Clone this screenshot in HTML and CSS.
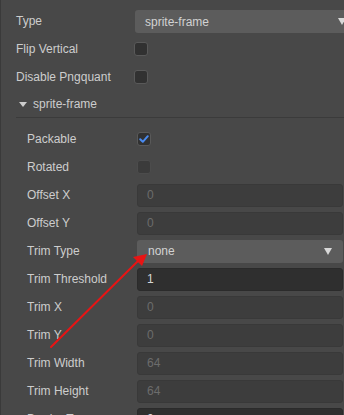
FILE: index.html
```html
<!DOCTYPE html>
<html lang="en">
  <head>
    <meta charset="utf-8" />
    <title>Inspector - sprite-frame</title>
    <link rel="stylesheet" href="styles.css">
  </head>
  <body>
    <div class="panel">
      <div class="row">
        <div class="label">Type</div>
        <div class="select select-wide">
          <span>sprite-frame</span>
          <span class="caret"></span>
        </div>
      </div>
      <div class="row">
        <div class="label">Flip Vertical</div>
        <div class="checkbox checkbox-top"></div>
      </div>
      <div class="row">
        <div class="label">Disable Pngquant</div>
        <div class="checkbox checkbox-top"></div>
      </div>

      <div class="section">
        <div class="section-header">
          <span class="fold"></span>
          <span>sprite-frame</span>
        </div>
        <div class="section-body">
          <div class="row sub">
            <div class="label">Packable</div>
            <div class="checkbox checked">
              <svg width="12" height="12" viewBox="0 0 12 12">
                <path d="M2.2 6.3 L4.8 8.8 L9.8 3.2" fill="none" stroke="#4a8bf0" stroke-width="2" stroke-linecap="round" stroke-linejoin="round"/>
              </svg>
            </div>
          </div>
          <div class="row sub">
            <div class="label">Rotated</div>
            <div class="checkbox disabled"></div>
          </div>
          <div class="row sub">
            <div class="label">Offset X</div>
            <div class="input disabled">0</div>
          </div>
          <div class="row sub">
            <div class="label">Offset Y</div>
            <div class="input disabled">0</div>
          </div>
          <div class="row sub">
            <div class="label">Trim Type</div>
            <div class="select">
              <span>none</span>
              <span class="caret"></span>
            </div>
          </div>
          <div class="row sub">
            <div class="label">Trim Threshold</div>
            <div class="input">1</div>
          </div>
          <div class="row sub">
            <div class="label">Trim X</div>
            <div class="input disabled">0</div>
          </div>
          <div class="row sub">
            <div class="label">Trim Y</div>
            <div class="input disabled">0</div>
          </div>
          <div class="row sub">
            <div class="label">Trim Width</div>
            <div class="input disabled">64</div>
          </div>
          <div class="row sub">
            <div class="label">Trim Height</div>
            <div class="input disabled">64</div>
          </div>
          <div class="row sub">
            <div class="label">Border Top</div>
            <div class="input">0</div>
          </div>
        </div>
      </div>
    </div>

    <!-- annotation arrow -->
    <svg class="annotation" width="344" height="415" viewBox="0 0 344 415">
      <line x1="51" y1="347" x2="139" y2="260" stroke="#e81414" stroke-width="2" stroke-linecap="round"/>
      <polygon points="147,254 133,257 142,266" fill="#e81414"/>
    </svg>
  </body>
</html>
```

FILE: styles.css
```css
* {
  margin: 0;
  padding: 0;
  box-sizing: border-box;
}

html {
  overflow: hidden;
}

body {
  font-family: 'Liberation Sans', Arial, sans-serif;
  font-size: 12px;
  color: #cdcdcd;
  background-color: #484848;
  border-left: 1px solid #3a3a3a;
  height: 415px;
  position: relative;
}

.panel {
  width: 356px;
  padding: 7px 0 0 15px;
}

.row {
  display: flex;
  align-items: center;
  height: 28px;
}

.label {
  width: 119px;
  flex-shrink: 0;
  white-space: nowrap;
}

.row.sub .label {
  width: 110px;
}

/* dropdowns */
.select {
  flex: 1;
  height: 23px;
  display: flex;
  align-items: center;
  justify-content: space-between;
  padding: 0 11px 0 11px;
  background: #5c5c5c;
  border-radius: 3px;
  color: #d2d2d2;
}

.select-wide {
  padding-left: 10px;
  margin-top: 1px;
}

.caret {
  width: 0;
  height: 0;
  border-left: 4px solid transparent;
  border-right: 4px solid transparent;
  border-top: 7px solid #d8d8d8;
}

/* checkboxes */
.checkbox {
  width: 14px;
  height: 14px;
  border: 1px solid #595959;
  border-radius: 3px;
  background: #313131;
  display: flex;
  align-items: center;
  justify-content: center;
}

.checkbox-top {
  margin-left: -1px;
}

.checkbox.disabled {
  background: #3b3b3b;
  border-color: #4c4c4c;
}

/* inputs */
.input {
  flex: 1;
  height: 23px;
  display: flex;
  align-items: center;
  padding-left: 9px;
  background: #2f2f2f;
  border: 1px solid #2b2b2b;
  border-radius: 3px;
  color: #d6d6d6;
}

.input.disabled {
  background: #3d3d3d;
  border-color: #393939;
  color: #6c6c6c;
}

/* folding section */
.section-header {
  height: 27px;
  display: flex;
  align-items: center;
  gap: 6px;
  padding-left: 3px;
  border-bottom: 1px solid #3b3b3b;
}

.fold {
  width: 0;
  height: 0;
  border-left: 4px solid transparent;
  border-right: 4px solid transparent;
  border-top: 5px solid #cdcdcd;
}

.section-body {
  padding: 7px 14px 0 11px;
}

.annotation {
  position: absolute;
  top: 0;
  left: -1px;
  pointer-events: none;
}
```
